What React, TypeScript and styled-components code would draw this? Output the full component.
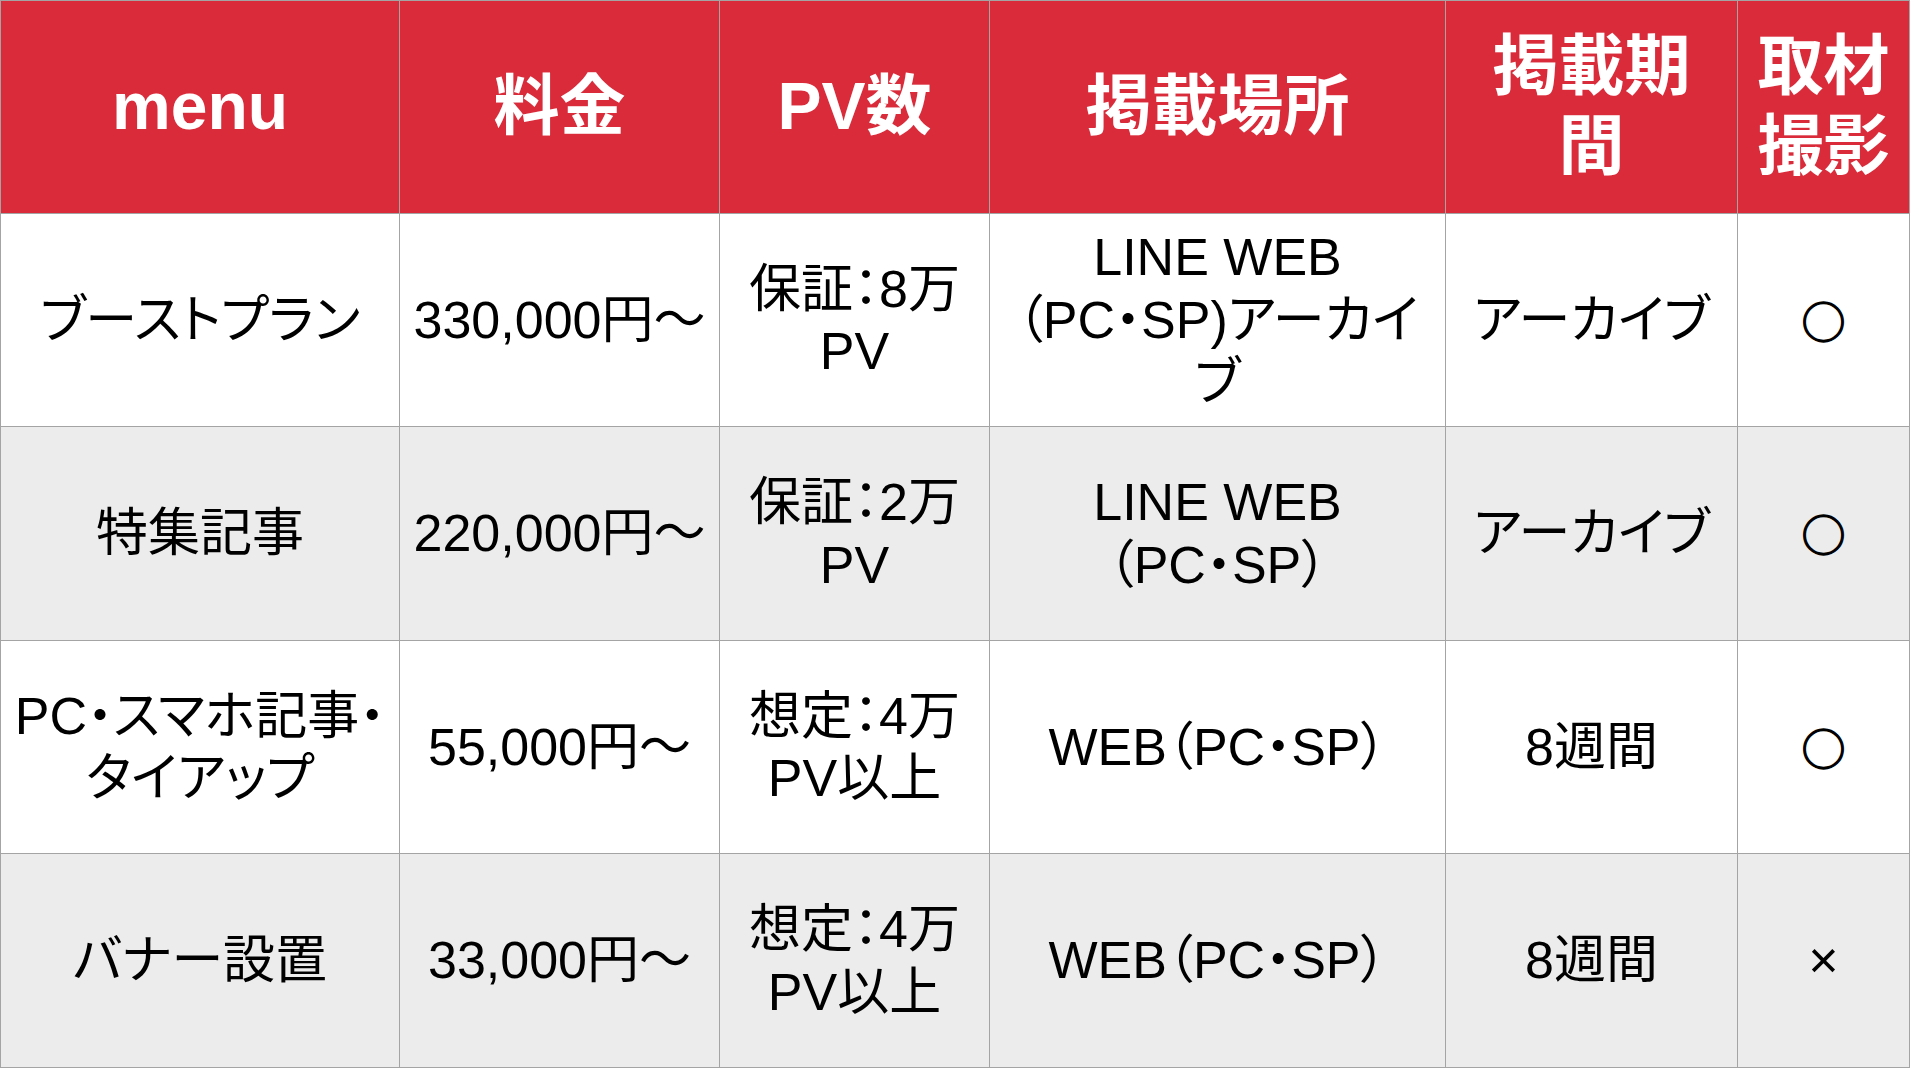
import styled, { createGlobalStyle } from "styled-components";

const GlobalStyle = createGlobalStyle`
  html, body {
    margin: 0;
    padding: 0;
    background: #ffffff;
  }
  body {
    font-family: "Liberation Sans", "Noto Sans CJK JP", sans-serif;
  }
`;

const LINE = "#a4a4a4";
const RED = "#d92b3a";
const STRIPE = "#ececec";

const Grid = styled.div`
  display: grid;
  grid-template-columns: 399px 320px 270px 456px 292px 172px;
  grid-template-rows: 213px 213px 214px 213px 214px;
  width: max-content;
  border-top: 1px solid ${LINE};
  border-left: 1px solid ${LINE};
`;

const Cell = styled.div<{ $striped?: boolean }>`
  box-sizing: border-box;
  display: flex;
  flex-direction: column;
  align-items: center;
  justify-content: center;
  text-align: center;
  border-right: 1px solid ${LINE};
  border-bottom: 1px solid ${LINE};
  background: ${(p) => (p.$striped ? STRIPE : "#ffffff")};
  color: #000000;
  font-size: 52px;
  line-height: 1.2;
  font-feature-settings: "palt";
`;

const HeadCell = styled(Cell)`
  background: ${RED};
  color: #ffffff;
  font-size: 66px;
  font-weight: 700;
  line-height: 1.21;
`;

const Line = styled.span`
  display: block;
  white-space: nowrap;
`;

// ○ mark: a bit smaller and heavier than the text glyph
const Mark = styled.span`
  font-family: "Noto Sans CJK JP", sans-serif;
  font-feature-settings: normal;
  font-size: 44px;
  -webkit-text-stroke: 1.3px #000;
`;

type Row = {
  menu: string[];
  price: string;
  pv: string[];
  place: string[];
  period: string;
  shoot: "ok" | "ng";
};

const heads: string[][] = [
  ["menu"],
  ["料金"],
  ["PV数"],
  ["掲載場所"],
  ["掲載期", "間"],
  ["取材", "撮影"],
];

const rows: Row[] = [
  {
    menu: ["ブーストプラン"],
    price: "330,000円～",
    pv: ["保証：8万", "PV"],
    place: ["LINE WEB", "（PC・SP)アーカイ", "ブ"],
    period: "アーカイブ",
    shoot: "ok",
  },
  {
    menu: ["特集記事"],
    price: "220,000円～",
    pv: ["保証：2万", "PV"],
    place: ["LINE WEB", "（PC・SP）"],
    period: "アーカイブ",
    shoot: "ok",
  },
  {
    menu: ["PC・スマホ記事・", "タイアップ"],
    price: "55,000円～",
    pv: ["想定：4万", "PV以上"],
    place: ["WEB（PC・SP）"],
    period: "8週間",
    shoot: "ok",
  },
  {
    menu: ["バナー設置"],
    price: "33,000円～",
    pv: ["想定：4万", "PV以上"],
    place: ["WEB（PC・SP）"],
    period: "8週間",
    shoot: "ng",
  },
];

const Lines = ({ lines }: { lines: string[] }) => (
  <>
    {lines.map((l, i) => (
      <Line key={i}>{l}</Line>
    ))}
  </>
);

const App = () => {
  return (
    <>
      <GlobalStyle />
      <Grid>
        {heads.map((h, i) => (
          <HeadCell key={"h" + i}>
            <Lines lines={h} />
          </HeadCell>
        ))}
        {rows.map((r, i) => {
          const striped = i % 2 === 1;
          return [
            <Cell key={i + "a"} $striped={striped}>
              <Lines lines={r.menu} />
            </Cell>,
            <Cell key={i + "b"} $striped={striped}>
              <Line>{r.price}</Line>
            </Cell>,
            <Cell key={i + "c"} $striped={striped}>
              <Lines lines={r.pv} />
            </Cell>,
            <Cell key={i + "d"} $striped={striped}>
              <Lines lines={r.place} />
            </Cell>,
            <Cell key={i + "e"} $striped={striped}>
              <Line>{r.period}</Line>
            </Cell>,
            <Cell key={i + "f"} $striped={striped}>
              {r.shoot === "ok" ? <Mark>○</Mark> : <Line>×</Line>}
            </Cell>,
          ];
        })}
      </Grid>
    </>
  );
};

export default App;
